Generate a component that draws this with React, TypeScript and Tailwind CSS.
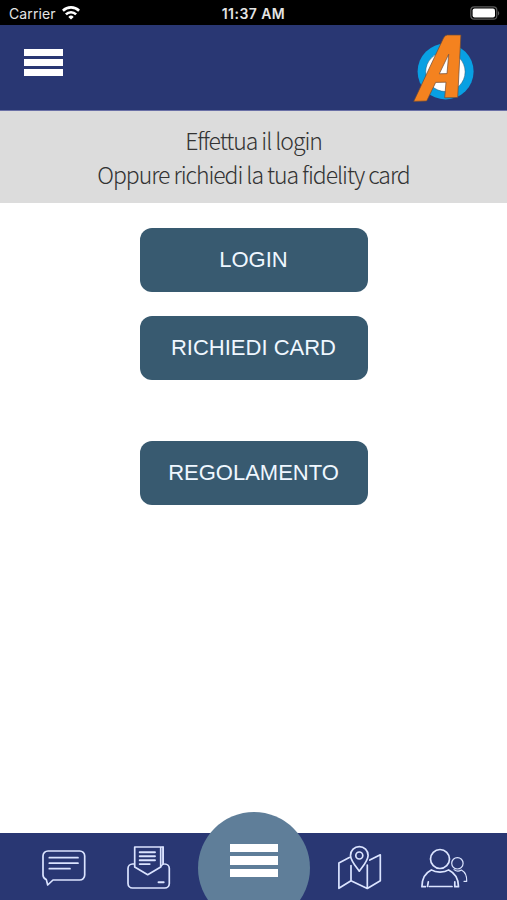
import type { ReactNode } from "react";

type TIconProps = {
  children: ReactNode;
};

function NavIcon({ children }: TIconProps) {
  return (
    <svg
      viewBox="0 0 48 48"
      className="size-12"
      fill="none"
      stroke="#dbe4ff"
      strokeWidth="1.7"
      strokeLinejoin="round"
      strokeLinecap="round"
    >
      {children}
    </svg>
  );
}

function StatusBar() {
  return (
    <div className="grid h-[25px] grid-cols-3 items-center bg-black px-[9px] font-['Inter','Liberation_Sans',sans-serif] text-[#e4e4e4]">
      <div className="flex items-center gap-[6px] pt-px text-[14px] leading-none">
        <span className="pt-px tracking-[0.1px]">Carrier</span>
        <svg viewBox="0 0 18 14" className="h-[14px] w-[18px]" fill="none" stroke="#fff" strokeWidth="2.6">
          <path d="M0.9 4.7a11.6 11.6 0 0 1 16.2 0" />
          <path d="M3.9 8.3a7.2 7.2 0 0 1 10.2 0" />
          <path d="M9 13.5 6.3 10.9a3.8 3.8 0 0 1 5.4 0z" fill="#fff" stroke="none" />
        </svg>
      </div>
      <span className="pt-[2px] text-center text-[14px] leading-none font-semibold tracking-[0.45px]">
        11:37 AM
      </span>
      <div className="flex justify-end pt-px">
        <svg viewBox="0 0 30 14" className="-mr-[2px] h-[14px] w-[30px]">
          <rect x="0.8" y="0.8" width="26" height="12.4" rx="3.5" fill="none" stroke="#5c5c5c" strokeWidth="1.2" />
          <rect x="2.6" y="2.5" width="22.4" height="9" rx="2" fill="#fff" />
          <path d="M28 5v4.4c1.7-.7 1.7-3.7 0-4.4z" fill="#5c5c5c" />
        </svg>
      </div>
    </div>
  );
}

function Logo() {
  return (
    <svg viewBox="0 0 64 72" className="h-[72px] w-16">
      <circle cx="33.6" cy="39.5" r="28" fill="#08a0e3" />
      <circle cx="33.4" cy="39.8" r="19.7" fill="#fff" stroke="#31566e" strokeWidth="0.5" />
      <path
        d="M35.3 3H48.9L45.7 65.5 32.7 65.8 34 50.2 23.7 50.4 14.7 69 1.7 69.4 31.5 6Q33 3 35.3 3zM36.7 22.3 27.3 41.8 35 41.6z"
        fill="#f4821f"
        stroke="#6b4a38"
        strokeWidth="0.7"
        fillRule="evenodd"
      />
    </svg>
  );
}

function Header() {
  return (
    <header className="flex h-[86px] items-start justify-between border-b border-[#6a70a6] bg-[#293773] pt-[7px] pr-[31px] pl-6">
      <button aria-label="Menu" className="mt-[17px] flex w-[39px] flex-col gap-[3px]">
        <span className="h-[7px] bg-white" />
        <span className="h-[7px] bg-white" />
        <span className="h-[7px] bg-white" />
      </button>
      <Logo />
    </header>
  );
}

function BottomNav() {
  return (
    <nav className="relative flex h-[67px] shrink-0 items-start justify-between bg-[#293773] px-[39px] pt-[11px]">
      <div className="flex gap-[37px]">
        <NavIcon>
          <path d="M9 7h31.7a5 5 0 0 1 5 5v19a5 5 0 0 1-5 5H14l-5.3 5-1.4-5.4A5 5 0 0 1 4 31V12a5 5 0 0 1 5-5z" />
          <path d="M10.3 13.7h28.7M10.3 19.2h28.7M10.3 24.7h20.7" />
        </NavIcon>
        <NavIcon>
          <path d="M10.7 23V3h28.4v17.2M36.7 3v20L23.7 30.7l-13-7.7" strokeWidth="1.7" />
          <path d="M39.1 3v17l-2.4 2.5" strokeWidth="1.3" />
          <path d="M10.3 20H8.5a4.5 4.5 0 0 0-4.5 4.5v15A4.5 4.5 0 0 0 8.5 44h32.3a4.5 4.5 0 0 0 4.5-4.5v-15a4.5 4.5 0 0 0-4.5-4.5" />
          <path d="M15.7 8.3h15.3M15.7 12.3h15.3M15.7 16.2h15.3M15.7 20.1h10M34.5 38.3h5.2" strokeWidth="1.9" />
        </NavIcon>
      </div>
      <div className="flex gap-[37px]">
        <NavIcon>
          <path d="M14.3 13.5 3.9 19v25.3L16 36.7l16.3 7.8 13-7.8V10.8L34.8 16M16 21.5v15.2M32.3 21v23.3" />
          <path d="M24.3 27.2c-4.5-6-8.8-11-8.8-15.8a8.8 8.8 0 0 1 17.6 0c0 4.8-4.3 9.8-8.8 15.8z" />
          <circle cx="24.3" cy="11.5" r="3.5" />
        </NavIcon>
        <NavIcon>
          <circle cx="20" cy="15" r="9.5" />
          <path d="M5.3 42.7H1.9c0-8 3.6-14 9.4-16.8 2.2 1.4 5.1 2.2 8.7 2.2s6.500-.8 8.700-2.2c5.800 2.800 9.800 8.800 9.800 16.800h-3.700V37.800" />
          <path d="M8.300 37.800 7.500 42.500M9.500 42.500h22.500" />
          <circle cx="37.4" cy="19.3" r="5.7" strokeWidth="1.2" />
          <path d="M34 25.600c2 1.700 5 1.900 7.400.4 3.600 2 5.600 6 5.300 11.300h-2.700" strokeWidth="1.2" />
        </NavIcon>
      </div>
      <div className="absolute -top-[21px] left-[198px] h-[88px] w-28 overflow-hidden">
        <button
          aria-label="Apri menu"
          className="flex size-28 flex-col items-center gap-[4.1px] rounded-full bg-[#5f7e99] pt-8"
        >
          <span className="h-[8.3px] w-12 bg-white" />
          <span className="h-[8.3px] w-12 bg-white" />
          <span className="h-[8.3px] w-12 bg-white" />
        </button>
      </div>
    </nav>
  );
}

const buttonClass =
  "flex h-[63.5px] w-[228px] items-center justify-center rounded-xl bg-[#385a70] text-[22px] text-[#eff7ff]";

export default function App() {
  return (
    <div className="flex h-[900px] w-[507px] flex-col overflow-hidden bg-white font-['Liberation_Sans',sans-serif]">
      <StatusBar />
      <Header />
      <div className="h-[92px] bg-[#dcdcdc] pt-[12px] text-center font-['Noto_Sans_CJK_JP',sans-serif] text-[23px] leading-[34px] font-light tracking-[-1.05px] text-[#333]">
        <p>Effettua il login</p>
        <p>Oppure richiedi la tua fidelity card</p>
      </div>
      <main className="flex flex-1 flex-col items-center pt-[25px]">
        <button className={buttonClass}>LOGIN</button>
        <button className={`${buttonClass} mt-[24.5px]`}>RICHIEDI CARD</button>
        <button className={`${buttonClass} mt-[61.5px]`}>REGOLAMENTO</button>
      </main>
      <BottomNav />
    </div>
  );
}
